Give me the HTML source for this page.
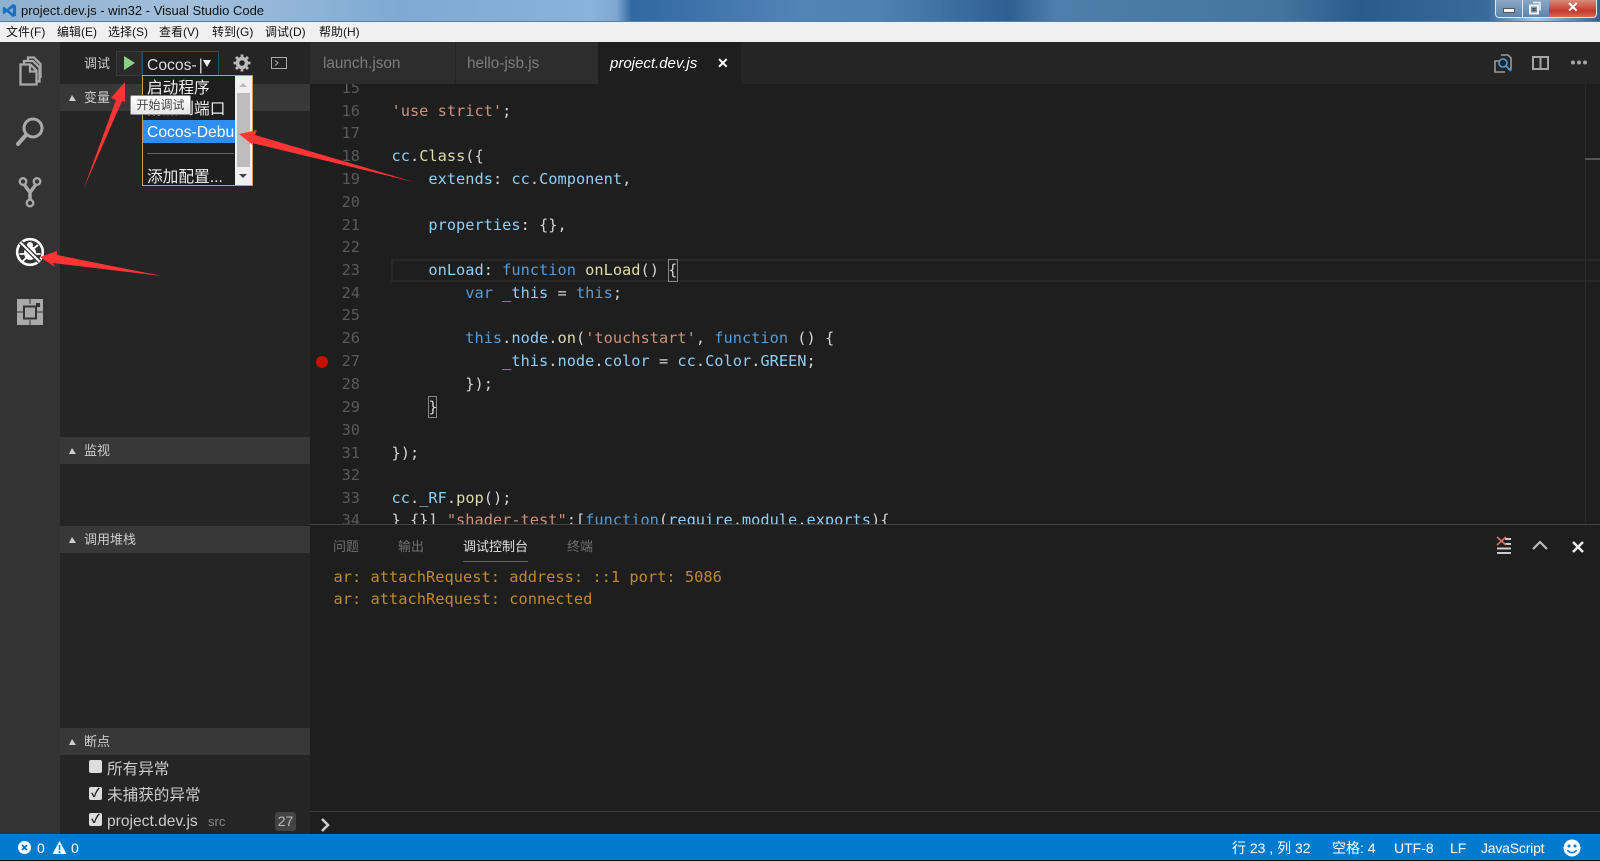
<!DOCTYPE html>
<html><head><meta charset="utf-8"><style>
*{box-sizing:border-box;margin:0;padding:0}
html,body{width:1600px;height:862px;overflow:hidden;background:#1e1e1e;font-family:"Liberation Sans","Noto Sans CJK SC",sans-serif}
.a{position:absolute;white-space:nowrap}
#title{left:0;top:0;width:1600px;height:21px;background:linear-gradient(90deg,#8fb0cf 0,#a2c0dc 12%,#7fa9d2 25%,#8ab2da 37%,#7fa8d0 38.500%,#2f68a3 39.500%,#5285b6 50%,#4f82b3 55%,#2f5f92 63%,#4f7eac 66%,#44749f 80%,#2b5a8d 85%,#3a6a9a 93%,#a5c8e6 96%,#3a5f86 100%)}
#menu{left:0;top:21px;width:1600px;height:21px;background:#f0f0f0;border-top:1px solid #5d7d9d;font-size:12px;color:#111}
#menu span{position:absolute;top:3px;line-height:15px}
#act{left:0;top:42px;width:60px;height:792px;background:#333}
#side{left:60px;top:42px;width:250px;height:792px;background:#252526}
.sh{position:absolute;left:60px;width:250px;background:#383838;height:27px;color:#ccc;font-size:13px;line-height:27px;padding-left:24px}
.sh i{position:absolute;left:9px;top:11px;width:0;height:0;border-left:3px solid transparent;border-right:4px solid transparent;border-bottom:6px solid #ccc}
#tabs{left:310px;top:42px;width:1290px;height:42px;background:#252526}
.tab{position:absolute;top:0;height:42px;line-height:44px;font-size:15.300px;color:#7d7d7d}
#ed{left:310px;top:84px;width:1290px;height:440px;overflow:hidden;background:#1e1e1e}
.l{position:absolute;left:81.500px;height:23px;font:15.320px/23px "DejaVu Sans Mono",monospace;color:#d4d4d4;white-space:pre}
.n{position:absolute;width:50px;left:0;text-align:right;font:15.300px/23px "DejaVu Sans Mono",monospace;color:#5a5a5a}
.k{color:#569cd6}.v{color:#8fcff5}.s{color:#ce9178}.f{color:#dcdcaa}
#panel{left:310px;top:524px;width:1290px;height:310px;background:#1e1e1e;border-top:1px solid #414141}
.pt{position:absolute;top:12px;font-size:13px;line-height:20px;color:#6f6f6f}
.o{position:absolute;left:23.500px;font:15.370px/22px "DejaVu Sans Mono",monospace;color:#c08a2a;white-space:pre}
#status{left:0;top:834px;width:1600px;height:26px;background:#007acc;color:#fff;font-size:14px;line-height:28px}
#status span{position:absolute;top:0}
#foot{left:0;top:860px;width:1600px;height:2px;background:#111;border-bottom:1px solid #c8c8c8}
.it{position:absolute;left:107px;font-size:15.600px;line-height:24px;color:#ccc}
.cb{position:absolute;left:89px;width:13px;height:13px;background:#ddd;border-radius:2px;color:#222;font-size:12px;line-height:13px;text-align:center;font-weight:bold}
</style></head><body>
<div class="a" id="title"></div>
<svg class="a" style="left:2px;top:3px" width="15" height="15" viewBox="0 0 16 16"><path d="M11.500 1 15 2.500v11L11.500 15 5 9.500 2 12 .8 11V5L2 4l3 2.500zM11.500 5 7.500 8l4 3z" fill="#1f6fc0"/></svg>
<div class="a" style="left:21px;top:2px;font-size:13px;line-height:17px;color:#111">project.dev.js - win32 - Visual Studio Code</div>
<div class="a" style="left:1495px;top:0;width:102px;height:18px;border:1px solid #dfe8f0;border-top:0;border-radius:0 0 4px 4px;background:linear-gradient(#8aa8c6,#5d83a8)"></div>
<div class="a" style="left:1549px;top:0;width:47px;height:17px;background:linear-gradient(#d98a78,#c5392a 65%,#d96a55);border-radius:0 0 3px 0"></div>
<div class="a" style="left:1522px;top:0;width:1px;height:17px;background:#dfe8f0"></div>
<div class="a" style="left:1503px;top:8px;width:12px;height:5px;background:#f4f4f4;border:1px solid #555"></div>
<svg class="a" style="left:1528px;top:1px" width="14" height="14" fill="none"><path d="M5 1.500h7v8" stroke="#eee" stroke-width="1.500"/><path d="M2 4.500h8v8H2z" stroke="#eee" stroke-width="2"/><path d="M5 7.500h2v2H5z" stroke="#445"/></svg>
<div class="a" style="left:1567px;top:0;font-size:14px;line-height:15px;font-weight:bold;color:#fff">✕</div>
<div class="a" id="menu"><span style="left:6px">文件(F)</span><span style="left:57px">编辑(E)</span><span style="left:108px">选择(S)</span><span style="left:159px">查看(V)</span><span style="left:212px">转到(G)</span><span style="left:265px">调试(D)</span><span style="left:319px">帮助(H)</span></div>

<div class="a" id="act"></div>
<svg class="a" style="left:0;top:42px" width="60" height="300" viewBox="0 0 60 300" fill="none">
<g stroke="#a9a9a9" stroke-width="2.300"><path d="M20.500 22.500h10l6 6v14h-16zM30 22.500v7h6.500"/><path d="M24 22v-3h9l6.500 6.500v14h-3"/><path d="M28 18v-2.500h6l6.500 6.500v14"/></g>
<g stroke="#a9a9a9" stroke-width="3"><circle cx="33" cy="86" r="9"/><path d="M26 93 18 102" stroke-linecap="round" stroke-width="4"/></g>
<g stroke="#a9a9a9" stroke-width="2.300"><circle cx="23" cy="139.500" r="3.300"/><circle cx="37" cy="139.500" r="3.300"/><circle cx="30" cy="161" r="3.300"/></g><path d="M24.500 143l5.500 7.500 5.500-7.500M30 150v8" stroke="#a9a9a9" stroke-width="3.500"/>
<circle cx="30" cy="210" r="12.800" stroke="#fff" stroke-width="2.600"/><ellipse cx="30" cy="211" rx="6" ry="7" fill="#fff"/><circle cx="30" cy="203" r="3" fill="#fff"/><path d="M22 203l5 4M38 203l-5 4M19.500 212h6M40.500 212h-6M22 220l4-4M38 220l-4-4" stroke="#fff" stroke-width="1.800"/><path d="M20.500 200.500l19 19" stroke="#333" stroke-width="4.500"/><path d="M20.500 200.500l19 19" stroke="#fff" stroke-width="2"/>
<rect x="17" y="257" width="26" height="26" fill="#a9a9a9"/>
<path d="M17 270h6M37 270h6M30 257v5M30 278v5" stroke="#333" stroke-width="1"/>
<rect x="24" y="264.500" width="12" height="12" fill="#a9a9a9" stroke="#333" stroke-width="2"/>
<rect x="36" y="261" width="4" height="4" fill="#333"/>
</svg>

<div class="a" id="side"></div>
<div class="a" style="left:84px;top:55px;font-size:13px;line-height:18px;color:#ccc">调试</div>
<div class="a" style="left:116px;top:51px;width:26px;height:25px;background:#2a2a2a;border:1px solid #3b3b3b"></div>
<svg class="a" style="left:122px;top:55px" width="14" height="16"><path d="M2 1l11 7-11 7z" fill="#89d185"/></svg>
<div class="a" style="left:142px;top:51px;width:77px;height:25px;background:#1e1e1e;border:1px solid #264f6b;font-size:15.700px;line-height:27px;color:#ddd;padding-left:4px;overflow:hidden">Cocos-<span style="display:inline-block;margin-left:2px">|</span><span style="position:absolute;left:60px;top:8px;width:0;height:0;border:4.500px solid transparent;border-top:7px solid #eee"></span></div>
<svg class="a" style="left:232px;top:53px" width="20" height="20" viewBox="0 0 20 20"><circle cx="10" cy="10" r="4.500" fill="none" stroke="#bbb" stroke-width="3.500"/><path d="M10 1.500v3M10 15.500v3M1.500 10h3M15.500 10h3M4 4l2 2M14 14l2 2M16 4l-2 2M6 14l-2 2" stroke="#bbb" stroke-width="2.800"/></svg>
<svg class="a" style="left:270px;top:56px" width="19" height="14"><path d="M1.500 1.500h15v11h-15z" fill="none" stroke="#aaa"/><path d="M5 4.500l3 2.500-3 2.500" fill="none" stroke="#aaa"/></svg>

<div class="sh" style="top:84px"><i></i>变量</div>
<div class="sh" style="top:437px"><i></i>监视</div>
<div class="sh" style="top:526px"><i></i>调用堆栈</div>
<div class="sh" style="top:728px"><i></i>断点</div>
<div class="cb" style="top:760px"></div><div class="it" style="top:758px">所有异常</div>
<div class="cb" style="top:787px">✓</div><div class="it" style="top:784px">未捕获的异常</div>
<div class="cb" style="top:813px">✓</div><div class="it" style="top:810px">project.dev.js <span style="font-size:13px;color:#888;margin-left:6px">src</span></div>
<div class="a" style="left:275px;top:812px;width:21px;height:19px;background:#444;border-radius:3px;color:#bbb;font-size:14px;line-height:19px;text-align:center">27</div>

<div class="a" id="tabs">
<div class="tab" style="left:0;width:145px;background:#2d2d2d;padding-left:13px">launch.json</div>
<div class="tab" style="left:145px;width:143px;background:#2d2d2d;padding-left:11px;border-left:1px solid #252526">hello-jsb.js</div>
<div class="tab" style="left:288px;width:143px;background:#1e1e1e;padding-left:12px;color:#fff;font-style:italic"><span style="font-size:15px">project.dev.js</span><span style="position:absolute;left:119px;top:-1px;font-style:normal;font-weight:bold;font-size:14px">✕</span></div>
</div>
<svg class="a" style="left:1492px;top:52px" width="22" height="22" fill="none"><path d="M9 3h7l3 3v11h-3M8 9H3v11h10" stroke="#9a9a9a" stroke-width="1.600"/><circle cx="11" cy="11" r="4" stroke="#4aa3e8" stroke-width="1.600"/><path d="M14 14l5 5" stroke="#4aa3e8" stroke-width="1.600"/></svg>
<svg class="a" style="left:1531px;top:55px" width="19" height="16" fill="none"><path d="M2 2h15v12H2zM9.500 2v12" stroke="#a5a5a5" stroke-width="2"/></svg>
<svg class="a" style="left:1570px;top:59px" width="18" height="7" fill="#a5a5a5"><circle cx="3" cy="3.500" r="2"/><circle cx="9" cy="3.500" r="2"/><circle cx="15" cy="3.500" r="2"/></svg>

<div class="a" id="ed">
<div class="a" style="left:81px;top:175px;width:1209px;height:23px;border:2px solid #282828;border-right:0"></div>
<div class="a" style="left:358px;top:175px;width:10px;height:23px;border:1px solid #888"></div>
<div class="a" style="left:118px;top:312px;width:9px;height:22px;border:1px solid #888"></div>
<div class="a" style="left:1275px;top:0;width:1px;height:440px;background:#2c2c2c"></div>
<div class="a" style="left:1275px;top:74px;width:15px;height:2px;background:#555"></div>
<div class="n" style="top:-7px">15</div>
<div class="n" style="top:15.500px">16</div><div class="l" style="top:15.500px"><span class="s">'use strict'</span>;</div>
<div class="n" style="top:38.300px">17</div>
<div class="n" style="top:61px">18</div><div class="l" style="top:61px"><span class="v">cc</span>.<span class="f">Class</span>({</div>
<div class="n" style="top:84px">19</div><div class="l" style="top:84px">    <span class="v">extends</span>: <span class="v">cc</span>.<span class="v">Component</span>,</div>
<div class="n" style="top:107px">20</div>
<div class="n" style="top:130px">21</div><div class="l" style="top:130px">    <span class="v">properties</span>: {},</div>
<div class="n" style="top:152px">22</div>
<div class="n" style="top:175px">23</div><div class="l" style="top:175px">    <span class="v">onLoad</span>: <span class="k">function</span> <span class="f">onLoad</span>() {</div>
<div class="n" style="top:198px">24</div><div class="l" style="top:198px">        <span class="k">var</span> <span class="v">_this</span> = <span class="k">this</span>;</div>
<div class="n" style="top:220.300px">25</div>
<div class="n" style="top:243px">26</div><div class="l" style="top:243px">        <span class="k">this</span>.<span class="v">node</span>.<span class="f">on</span>(<span class="s">'touchstart'</span>, <span class="k">function</span> () {</div>
<div class="n" style="top:266px">27</div><div class="l" style="top:266px">            <span class="v">_this</span>.<span class="v">node</span>.<span class="v">color</span> = <span class="v">cc</span>.<span class="v">Color</span>.<span class="v">GREEN</span>;</div>
<div class="n" style="top:289px">28</div><div class="l" style="top:289px">        });</div>
<div class="n" style="top:312px">29</div><div class="l" style="top:312px">    }</div>
<div class="n" style="top:335px">30</div>
<div class="n" style="top:358px">31</div><div class="l" style="top:358px">});</div>
<div class="n" style="top:380px">32</div>
<div class="n" style="top:403px">33</div><div class="l" style="top:403px"><span class="v">cc</span>.<span class="v">_RF</span>.<span class="f">pop</span>();</div>
<div class="n" style="top:425px">34</div><div class="l" style="top:425px">} {}] <span class="s">"shader-test"</span>:[<span class="k">function</span>(<span class="v">require</span>,<span class="v">module</span>,<span class="v">exports</span>){</div>
<div class="a" style="left:6px;top:272px;width:12px;height:12px;border-radius:50%;background:#c81000"></div>
</div>

<div class="a" id="panel">
<div class="pt" style="left:23px">问题</div><div class="pt" style="left:88px">输出</div>
<div class="pt" style="left:153px;color:#e0e0e0;border-bottom:1px solid #666;padding-bottom:4px">调试控制台</div><div class="pt" style="left:257px">终端</div>
<div class="o" style="top:41px">ar: attachRequest: address: ::1 port: 5086</div>
<div class="o" style="top:63px">ar: attachRequest: connected</div>
<div class="a" style="left:0;top:286px;width:1290px;height:1px;background:#3c3c3c"></div>
<svg class="a" style="left:9px;top:292px" width="14" height="16" fill="none"><path d="M3 2l6 6-6 6" stroke="#ccc" stroke-width="2.500"/></svg>
<svg class="a" style="left:1186px;top:11px" width="20" height="20" fill="none"><path d="M1 17h14M1 12.500h14M9 8h6M9 3h6" stroke="#ccc" stroke-width="2"/><path d="M1 1l9 8M10 1l-9 8" stroke="#e0705c" stroke-width="1.600"/></svg>
<svg class="a" style="left:1221px;top:14px" width="18" height="12" fill="none"><path d="M2 10l7-7 7 7" stroke="#bbb" stroke-width="2.200"/></svg>
<svg class="a" style="left:1261px;top:15px" width="14" height="14" fill="none"><path d="M2 2l10 10M12 2 2 12" stroke="#eee" stroke-width="2.500"/></svg>
</div>

<div class="a" id="status">
<svg style="position:absolute;left:17px;top:6px" width="15" height="15"><circle cx="7.500" cy="7.500" r="6.500" fill="#fff"/><path d="M5 5l5 5M10 5l-5 5" stroke="#007acc" stroke-width="1.800"/></svg>
<span style="left:37px">0</span>
<svg style="position:absolute;left:52px;top:6px" width="15" height="15"><path d="M7.500 1 14.500 14h-14z" fill="#fff"/><path d="M7.500 5v5M7.500 11v2" stroke="#007acc" stroke-width="1.600"/></svg>
<span style="left:71px">0</span>
<span style="left:1232px">行 23 , 列 32</span><span style="left:1332px">空格: 4</span><span style="left:1394px">UTF-8</span><span style="left:1450px">LF</span><span style="left:1481px;letter-spacing:-.2px">JavaScript</span>
<svg style="position:absolute;left:1563px;top:5px" width="18" height="18"><circle cx="9" cy="9" r="8.500" fill="#fff"/><circle cx="6" cy="7" r="1.500" fill="#007acc"/><circle cx="12" cy="7" r="1.500" fill="#007acc"/><path d="M4.500 11c2 3.500 7 3.500 9 0" fill="none" stroke="#007acc" stroke-width="1.500"/></svg>
</div>
<div class="a" id="foot"></div>

<div class="a" style="left:142px;top:75px;width:111px;height:111px;background:#1e1e1e;border:1px solid #c8a050;overflow:hidden;font-size:15.700px;line-height:22px;color:#eee">
<div class="a" style="left:4px;top:2px">启动程序</div>
<div class="a" style="left:4px;top:23px">附加到端口</div>
<div class="a" style="left:0;top:44px;width:92px;height:23px;background:#2f8ff0;color:#fff;padding-left:4px;line-height:25px;overflow:hidden">Cocos-Debug</div>
<div class="a" style="left:4px;top:77px;width:87px;height:1px;background:#666"></div>
<div class="a" style="left:4px;top:91px">添加配置...</div>
<div class="a" style="left:92px;top:0;width:17px;height:109px;background:#f0f0f0"></div>
<div class="a" style="left:94px;top:17px;width:13px;height:74px;background:#bdbdbd"></div>
<div class="a" style="left:96px;top:7px;width:0;height:0;border-left:4px solid transparent;border-right:4px solid transparent;border-bottom:4px solid #bbb"></div>
<div class="a" style="left:96px;top:98px;width:0;height:0;border-left:4px solid transparent;border-right:4px solid transparent;border-top:4px solid #444"></div>
</div>
<div class="a" style="left:130px;top:95px;width:61px;height:20px;background:linear-gradient(#fff,#e6e6e6);border:1px solid #888;border-radius:2px;color:#444;font-size:12px;line-height:18px;text-align:center">开始调试</div>

<svg class="a" style="left:0;top:0" width="1600" height="862" fill="#ff3535">
<path d="M84 188 116 100 111 98 125 82 125 102 122 101z"/>
<path d="M239 134 257 130 255 135 414 182 252 143 254 146z"/>
<path d="M40 257 57 251 57 255 162 276 53 263 55 267z"/>
</svg>
</body></html>
